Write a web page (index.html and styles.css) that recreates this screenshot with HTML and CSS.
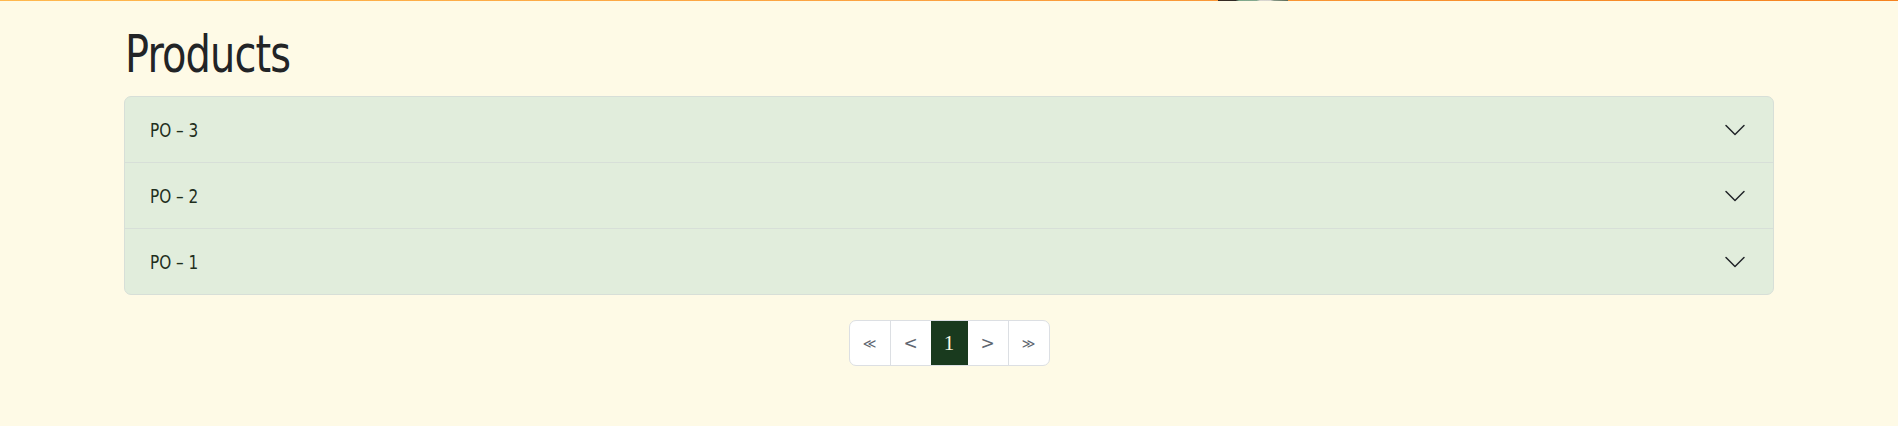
FILE: index.html
```html
<!DOCTYPE html>
<html lang="en">
<head>
<meta charset="utf-8">
<title>Products</title>
<link rel="stylesheet" href="styles.css">
</head>
<body>
<div class="topbar"><span class="topbar-logo"></span></div>
<main class="container">
  <h1 class="title">Products</h1>
  <div class="accordion">
    <div class="accordion-item">
      <button class="accordion-button" type="button">
        <span class="accordion-label">PO – 3</span>
        <svg class="chevron" viewBox="0 0 16 16" width="24" height="24" aria-hidden="true"><path fill="currentColor" d="M1.646 4.646a.5.5 0 0 1 .708 0L8 10.293l5.646-5.647a.5.5 0 0 1 .708.708l-6 6a.5.5 0 0 1-.708 0l-6-6a.5.5 0 0 1 0-.708z"/></svg>
      </button>
    </div>
    <div class="accordion-item">
      <button class="accordion-button" type="button">
        <span class="accordion-label">PO – 2</span>
        <svg class="chevron" viewBox="0 0 16 16" width="24" height="24" aria-hidden="true"><path fill="currentColor" d="M1.646 4.646a.5.5 0 0 1 .708 0L8 10.293l5.646-5.647a.5.5 0 0 1 .708.708l-6 6a.5.5 0 0 1-.708 0l-6-6a.5.5 0 0 1 0-.708z"/></svg>
      </button>
    </div>
    <div class="accordion-item">
      <button class="accordion-button" type="button">
        <span class="accordion-label">PO – 1</span>
        <svg class="chevron" viewBox="0 0 16 16" width="24" height="24" aria-hidden="true"><path fill="currentColor" d="M1.646 4.646a.5.5 0 0 1 .708 0L8 10.293l5.646-5.647a.5.5 0 0 1 .708.708l-6 6a.5.5 0 0 1-.708 0l-6-6a.5.5 0 0 1 0-.708z"/></svg>
      </button>
    </div>
  </div>
  <nav class="pager-wrap">
    <ul class="pagination">
      <li class="page-item"><a class="page-link small">≪</a></li>
      <li class="page-item"><a class="page-link">&lt;</a></li>
      <li class="page-item active"><a class="page-link">1</a></li>
      <li class="page-item after-active"><a class="page-link">&gt;</a></li>
      <li class="page-item"><a class="page-link small">≫</a></li>
    </ul>
  </nav>
</main>
</body>
</html>
```

FILE: styles.css
```css
html, body {
  margin: 0;
  padding: 0;
}

body {
  background: #fefae6;
  font-family: "DejaVu Sans Condensed", "Liberation Sans", sans-serif;
  color: #212529;
  min-height: 426px;
}

.topbar {
  position: relative;
  height: 1px;
  background: linear-gradient(90deg, #ffb84e 0%, #fba040 50%, #f5821f 100%);
}

.topbar-logo {
  position: absolute;
  left: 1218px;
  top: 0;
  width: 70px;
  height: 1px;
  background: linear-gradient(90deg, #3a2a20 0%, #2f2a26 25%, #7fa88a 30%, #86a990 55%, #d9d6d0 60%, #d6d4cf 75%, #8a9a88 80%, #5a6a58 100%);
}

.container {
  width: 1650px;
  margin: 0 auto;
}

.title {
  margin: 23px 0 10px 1px;
  font-size: 51px;
  line-height: 62px;
  font-weight: 400;
  color: #222426;
  letter-spacing: -1px;
  transform: scaleX(0.87);
  transform-origin: left center;
}

.accordion {
  border: 1px solid #d7dfd8;
  border-radius: 7px;
  background: #e1eddc;
  overflow: hidden;
}

.accordion-item + .accordion-item {
  border-top: 1px solid #d7dfd8;
}

.accordion-button {
  display: flex;
  align-items: center;
  justify-content: space-between;
  width: 100%;
  height: 65px;
  padding: 0 26px 0 25px;
  border: 0;
  background: transparent;
  font-family: inherit;
  font-size: 20px;
  color: #1f2f1c;
  text-align: left;
  cursor: pointer;
}

.accordion-label {
  display: inline-block;
  padding-top: 1px;
  transform: scaleX(0.85);
  transform-origin: left center;
}

.chevron {
  display: block;
  color: #212529;
}

.pager-wrap {
  display: flex;
  justify-content: center;
  margin-top: 25px;
}

.pagination {
  display: flex;
  list-style: none;
  margin: 0;
  padding: 0;
  border: 1px solid #dcdfe3;
  border-radius: 7px;
  background: #ffffff;
  overflow: hidden;
}

.page-item + .page-item {
  border-left: 1px solid #dcdfe3;
}

.page-item.active,
.page-item.after-active {
  border-left: 0;
}

.page-link {
  display: flex;
  align-items: center;
  justify-content: center;
  width: 40px;
  height: 44px;
  font-family: "DejaVu Sans", "Liberation Sans", sans-serif;
  font-size: 17px;
  color: #5f6771;
  text-decoration: none;
}

.page-link.small {
  font-size: 13px;
}

.page-item.active .page-link {
  width: 37px;
  background: #193a1e;
  color: #fefae6;
  font-family: "Liberation Serif", "DejaVu Serif", serif;
  font-size: 21px;
}
```
